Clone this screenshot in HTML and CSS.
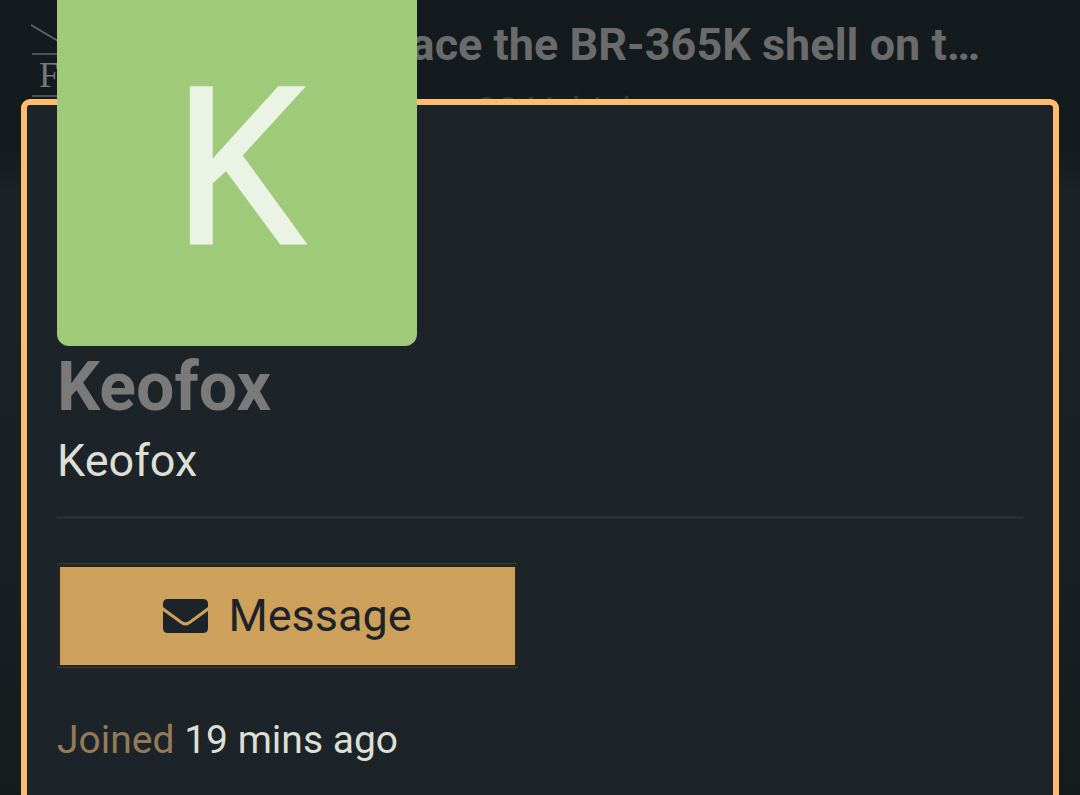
FILE: index.html
```html
<!DOCTYPE html>
<html lang="en">
<head>
<meta charset="utf-8">
<meta name="viewport" content="width=device-width, initial-scale=1">
<title>Keofox</title>
<link rel="stylesheet" href="styles.css">
</head>
<body>
<header class="topic">
  <svg class="topic-logo" viewBox="0 0 80 99" aria-hidden="true">
    <path d="M1 25L79 71" stroke="#62686b" stroke-width="1.5"/>
    <path d="M2 54H79M2 96H79" stroke="#4c5255" stroke-width="2"/>
    <text class="topic-logo-letter" x="9" y="87">F</text>
  </svg>
  <div class="topic-text">
    <h2 class="topic-title">Replace the BR-365K shell on t…</h2>
    <p class="topic-meta">22 Vehicles</p>
  </div>
</header>
<main class="card">
  <div class="avatar" role="img" aria-label="Keofox avatar">K</div>
  <h1 class="username">Keofox</h1>
  <p class="fullname">Keofox</p>
  <hr class="divider">
  <button class="message" type="button">
    <svg class="envelope" viewBox="0 0 45 34" aria-hidden="true">
      <path d="M5 0H40Q45 0 45 5V8L26 22Q22.500 24.500 19 22L0 8V5Q0 0 5 0Z"/>
      <path d="M0 12L18 25Q22.500 28 27 25L45 12V29Q45 34 40 34H5Q0 34 0 29Z"/>
    </svg>
    <span>Message</span>
  </button>
  <p class="joined"><span class="joined-label">Joined</span> 19 mins ago</p>
</main>
</body>
</html>
```
FILE: styles.css
```css
* { box-sizing: border-box; }
body {
  margin: 0;
  height: 100vh;
  overflow: hidden;
  display: flex;
  flex-direction: column;
  font-family: Roboto, sans-serif;
  color: #dddfd2;
  background: linear-gradient(#141b1e 0, #141b1e 150px, #1a2225 190px, #192124 520px, #141b1d 100%);
}
h1, h2, p { margin: 0; }
.topic {
  display: flex;
  flex: none;
  justify-content: space-between;
  height: 99px;
  padding: 0 100px 0 30px;
}
.topic-logo { flex: none; width: 80px; height: 99px; }
.topic-logo-letter { font: 36px "Liberation Serif", serif; fill: #74797b; }
.topic-text { padding-top: 18px; white-space: nowrap; }
.topic-title { font-size: 45px; line-height: 54px; font-weight: 700; color: #6b6b6b; }
.topic-meta { padding: 16px 0 0 156px; font-size: 38px; line-height: 48px; color: #343b3e; }
.card {
  position: relative;
  flex: 1 0 auto;
  margin: 0 21px;
  padding: 0 30px 36px;
  border: 6px solid #ffbb6e;
  border-bottom: 0;
  border-radius: 9px 9px 0 0;
  background: #1c2329;
}
.avatar {
  display: flex;
  align-items: center;
  justify-content: center;
  width: 360px;
  height: 360px;
  margin-top: -119px;
  padding-bottom: 14px;
  border-radius: 12px;
  background: #9fca7a;
  color: #ebf4e4;
  font-family: "Open Sans", "Noto Sans", sans-serif;
  font-size: 214px;
  line-height: 1;
  -webkit-text-stroke: 5px #ebf4e4;
}
.username { padding-top: 1px; font-size: 68px; line-height: 80px; font-weight: 700; color: #7a7a7a; }
.fullname { font-size: 45px; line-height: 68px; }
.divider { height: 3px; margin: 21px 0 44px; border: 0; background: #263036; }
.message {
  display: flex;
  align-items: center;
  justify-content: center;
  gap: 20px;
  width: 461px;
  height: 105px;
  padding: 0;
  border: 1px solid #3a3b36;
  border-width: 1px 0;
  background: linear-gradient(#cda05c, #cda05c) center / calc(100% - 6px) calc(100% - 5px) no-repeat #26251f;
  color: #1c2329;
  font: 45px Roboto, sans-serif;
}
.envelope { width: 45px; height: 34px; fill: currentColor; }
.joined { margin-top: 48px; font-size: 39px; line-height: 48px; }
.joined-label { color: #937b57; }
```
